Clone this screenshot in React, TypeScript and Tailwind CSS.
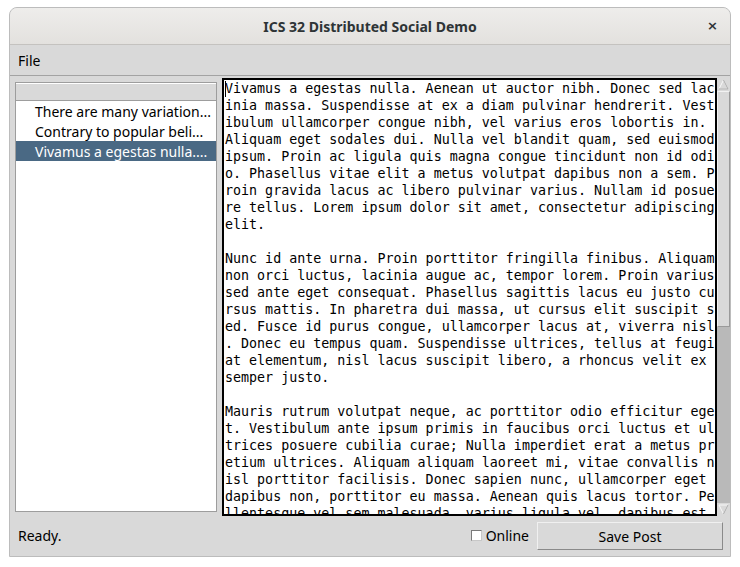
import React from 'react';

const lines = [
  'Vivamus a egestas nulla. Aenean ut auctor nibh. Donec sed lac',
  'inia massa. Suspendisse at ex a diam pulvinar hendrerit. Vest',
  'ibulum ullamcorper congue nibh, vel varius eros lobortis in. ',
  'Aliquam eget sodales dui. Nulla vel blandit quam, sed euismod',
  'ipsum. Proin ac ligula quis magna congue tincidunt non id odi',
  'o. Phasellus vitae elit a metus volutpat dapibus non a sem. P',
  'roin gravida lacus ac libero pulvinar varius. Nullam id posue',
  're tellus. Lorem ipsum dolor sit amet, consectetur adipiscing',
  'elit.',
  '',
  'Nunc id ante urna. Proin porttitor fringilla finibus. Aliquam',
  'non orci luctus, lacinia augue ac, tempor lorem. Proin varius',
  'sed ante eget consequat. Phasellus sagittis lacus eu justo cu',
  'rsus mattis. In pharetra dui massa, ut cursus elit suscipit s',
  'ed. Fusce id purus congue, ullamcorper lacus at, viverra nisl',
  '. Donec eu tempus quam. Suspendisse ultrices, tellus at feugi',
  'at elementum, nisl lacus suscipit libero, a rhoncus velit ex ',
  'semper justo.',
  '',
  'Mauris rutrum volutpat neque, ac porttitor odio efficitur ege',
  't. Vestibulum ante ipsum primis in faucibus orci luctus et ul',
  'trices posuere cubilia curae; Nulla imperdiet erat a metus pr',
  'etium ultrices. Aliquam aliquam laoreet mi, vitae convallis n',
  'isl porttitor facilisis. Donec sapien nunc, ullamcorper eget ',
  'dapibus non, porttitor eu massa. Aenean quis lacus tortor. Pe',
  'llentesque vel sem malesuada, varius ligula vel, dapibus est.',
];

const posts = [
  'There are many variation...',
  'Contrary to popular beli...',
  'Vivamus a egestas nulla....',
];

const sans = "font-['Noto_Sans',sans-serif]";

export default function App() {
  const selected = 2;

  return (
    <div className="w-[740px] h-[567px] bg-white pt-[7px] pl-[9px] overflow-hidden">
      <div className="w-[722px] h-[550px] flex flex-col border border-[#bcbcbc] rounded-t-[8px] overflow-hidden bg-[#d9d9d9]">
        {/* Title bar */}
        <div className="h-[37px] shrink-0 flex items-center justify-center relative bg-gradient-to-b from-[#eeedeb] to-[#e3e1de] border-b border-[#c4c2bf]">
          <span className="font-['Noto_Sans',sans-serif] font-bold text-[14px] text-[#2e3436]">
            ICS 32 Distributed Social Demo
          </span>
          <span className="absolute right-[12px] top-[10px] font-['DejaVu_Sans',sans-serif] font-bold text-[13px] leading-[15px] text-[#2e3436]">
            ×
          </span>
        </div>

        {/* Menu bar */}
        <div className={`h-[31px] shrink-0 flex items-center pl-[8px] border-b border-[#a3a3a3] ${sans} text-[14px] text-black`}>
          File
        </div>

        {/* Main row */}
        <div className="flex items-start h-[441px] shrink-0">
          {/* Post list */}
          <div className="mt-[6px] ml-[5px] w-[202px] h-[430px] shrink-0 bg-white border border-[#9d9d9d] flex flex-col overflow-hidden">
            <div className="h-[18px] shrink-0 bg-[#d9d9d9] border-b border-[#9d9d9d] border-t border-t-white" />
            {posts.map((p, i) => (
              <div
                key={p}
                className={`h-[20px] shrink-0 flex items-center pl-[19px] whitespace-nowrap ${sans} text-[14px] ${
                  i === selected ? 'bg-[#4a6984] text-white' : 'text-black'
                }`}
              >
                {p}
              </div>
            ))}
          </div>

          {/* Text editor */}
          <div className="mt-[2px] ml-[5px] w-[495px] h-[438px] shrink-0 border-2 border-black bg-white overflow-hidden relative pl-[1px]">
            <span className="absolute left-[1px] top-[1px] w-px h-[16px] bg-black" />
            <div className="font-['DejaVu_Sans_Mono',monospace] text-[13.33px] leading-[17px] text-black">
              {lines.map((l, i) => (
                <div key={i} className="whitespace-pre h-[17px]">
                  {l}
                </div>
              ))}
            </div>
          </div>

          {/* Scrollbar */}
          <div className="mt-[2px] w-[13px] h-[438px] shrink-0 bg-[#b9b9b9] flex flex-col">
            <div className="h-[13px] shrink-0 bg-[#d9d9d9] flex items-center justify-center">
              <svg width="11" height="11" viewBox="0 0 11 11">
                <path d="M5.5 1 L10 10 L1 10 Z" fill="#d9d9d9" stroke="#f7f7f7" strokeWidth="1" />
                <path d="M10 10 L1 10 M5.5 1 L10 10" stroke="#a8a8a8" strokeWidth="1" />
              </svg>
            </div>
            <div className="h-[236px] shrink-0 bg-[#d9d9d9] border border-t-[#f2f2f2] border-l-[#f2f2f2] border-b-[#9a9a9a] border-r-[#9a9a9a]" />
            <div className="flex-1" />
            <div className="h-[13px] shrink-0 bg-[#d9d9d9] flex items-center justify-center">
              <svg width="11" height="11" viewBox="0 0 11 11">
                <path d="M1 1 L10 1 L5.5 10 Z" fill="#d9d9d9" stroke="#f7f7f7" strokeWidth="1" />
                <path d="M10 1 L5.5 10" stroke="#a8a8a8" strokeWidth="1" />
              </svg>
            </div>
          </div>
        </div>

        {/* Status bar */}
        <div className={`flex items-center h-[38px] shrink-0 ${sans} text-[14px] text-black`}>
          <span className="ml-[8px] -mt-px">Ready.</span>
          <div className="ml-auto flex items-center gap-[4px] -mt-px">
            <span className="w-[11px] h-[11px] bg-white border border-t-[#7a7a7a] border-l-[#7a7a7a] border-b-[#c8c8c8] border-r-[#c8c8c8]" />
            <span>Online</span>
          </div>
          <button
            type="button"
            className="ml-[8px] mr-[7px] w-[186px] h-[28px] shrink-0 bg-[#d9d9d9] border border-t-[#f0f0f0] border-l-[#f0f0f0] border-b-[#8a8a8a] border-r-[#8a8a8a] text-black"
          >
            Save Post
          </button>
        </div>
      </div>
    </div>
  );
}
